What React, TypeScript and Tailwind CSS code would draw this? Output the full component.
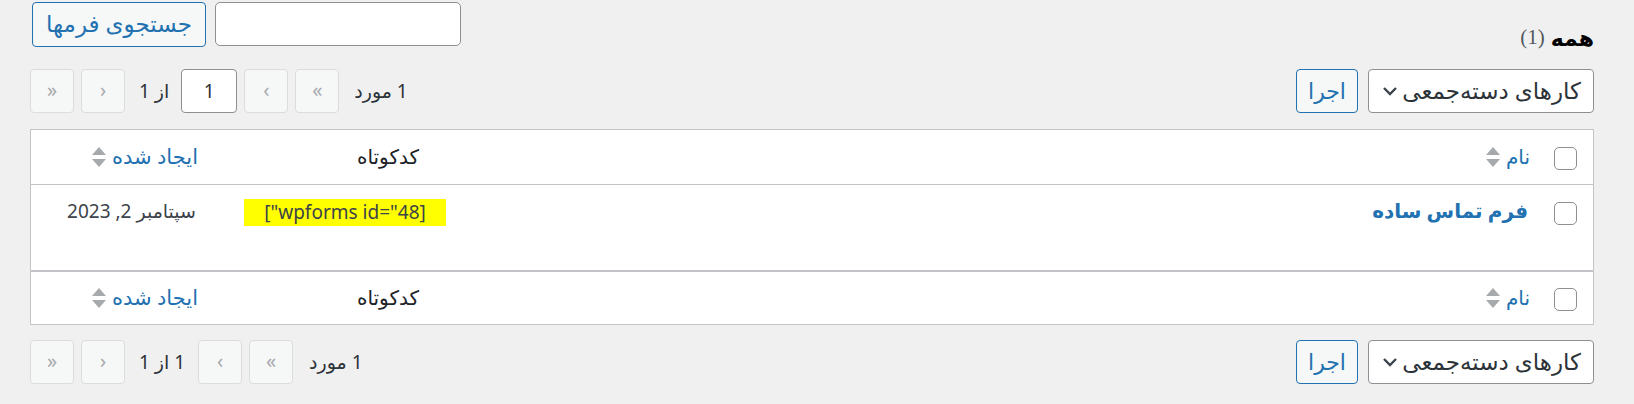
import React from "react";

const FONT = { fontFamily: '"Noto Sans", "DejaVu Sans", sans-serif' };

function SortIcon() {
  return (
    <svg width="14" height="22" viewBox="0 0 14 22" className="shrink-0">
      <path d="M0 9 L7 1 L14 9 Z" fill="#a7aaad" />
      <path d="M0 13 L14 13 L7 21 Z" fill="#a7aaad" />
    </svg>
  );
}

function Checkbox() {
  return <div className="w-[23px] h-[23px] rounded-[5px] border border-[#8c8f94] bg-white shrink-0" />;
}

function NavBtn({ glyph }: { glyph: string }) {
  return (
    <div className="w-[44px] h-[44px] rounded-[4px] border border-[#dcdcde] bg-[#f6f7f7] text-[#a7aaad] flex items-center justify-center text-[20px] leading-none pb-[2px] shrink-0">
      {glyph}
    </div>
  );
}

function BulkActions() {
  return (
    <div className="flex items-center gap-[10px]">
      <div className="w-[226px] h-[44px] rounded-[4px] border border-[#8c8f94] bg-white flex items-center justify-between pr-[12px] pl-[12px] text-[#2c3338]">
        <span className="text-[23px] leading-none pb-[2px]">کارهای دسته‌جمعی</span>
        <svg width="18" height="18" viewBox="0 0 18 18">
          <path d="M3 6 L9 12 L15 6" fill="none" stroke="#3c434a" strokeWidth="2.4" />
        </svg>
      </div>
      <div className="w-[62px] h-[44px] rounded-[4px] border border-[#2271b1] bg-[#f6f7f7] text-[#2271b1] flex items-center justify-center text-[22px] leading-none pb-[2px]">
        اجرا
      </div>
    </div>
  );
}

function Pagination({ top }: { top: boolean }) {
  return (
    <div className="flex items-center text-[19px] text-[#2c3338]">
      <span className={top ? "ml-[15px]" : "ml-[16px]"}>1 مورد</span>
      <NavBtn glyph="»" />
      <div className="w-[7px]" />
      <NavBtn glyph="›" />
      {top ? (
        <>
          <div className="w-[7px]" />
          <div className="w-[56px] h-[44px] rounded-[4px] border border-[#8c8f94] bg-white flex items-center justify-center">1</div>
          <span className="mr-[12px] ml-[14px]">از 1</span>
        </>
      ) : (
        <span className="mr-[13px] ml-[14px]">1 از 1</span>
      )}
      <NavBtn glyph="‹" />
      <div className="w-[7px]" />
      <NavBtn glyph="«" />
    </div>
  );
}

function HeadRow({ footer }: { footer?: boolean }) {
  return (
    <div
      className={
        "grid grid-cols-[54px_1fr_221px_179px] items-center " +
        (footer ? "h-[53px] border-t border-[#c3c4c7]" : "h-[55px] border-b border-[#c3c4c7]")
      }
    >
      <div className="flex justify-end pl-[15px] pt-[3px]">
        <Checkbox />
      </div>
      <div className="flex items-center gap-[6px] pr-[9px] text-[#2271b1]">
        <span className="text-[20px]">نام</span>
        <SortIcon />
      </div>
      <div className="pr-[12px] text-[#1d2327] text-[20px]">کدکوتاه</div>
      <div className="flex items-center gap-[6px] pr-[12px] text-[#2271b1]">
        <span className="text-[21px]">ایجاد شده</span>
        <SortIcon />
      </div>
    </div>
  );
}

export default function App() {
  return (
    <div dir="rtl" style={FONT} className="w-[1634px] h-[404px] bg-[#f0f0f0] pl-[30px] pr-[40px] text-[19px] leading-[1.4] text-[#3c434a] overflow-hidden">
      <div className="flex justify-between items-start h-[47px] pt-[2px]">
        <div className="pt-[20px] text-[#50575e] flex items-center gap-[6px]">
          <span className="font-bold text-[#000] text-[22px]">همه</span>
          <span style={{ fontFamily: '"Liberation Serif", serif' }} className="text-[21px]">(1)</span>
        </div>
        <div className="flex gap-[9px] ml-[2px]">
          <div className="w-[246px] h-[44px] rounded-[5px] border border-[#8c8f94] bg-white" />
          <div className="w-[174px] h-[45px] rounded-[4px] border border-[#2271b1] bg-[#f6f7f7] text-[#2271b1] flex items-center justify-center text-[23px] leading-none pb-[2px]">
            جستجوی فرمها
          </div>
        </div>
      </div>

      <div className="flex justify-between items-center h-[44px] mt-[22px]">
        <BulkActions />
        <Pagination top />
      </div>

      <div className="mt-[16px] border border-[#c3c4c7] bg-white">
        <HeadRow />
        <div className="grid grid-cols-[54px_1fr_221px_179px] items-start h-[86px] border-b border-[#c3c4c7]">
          <div className="flex justify-end pl-[15px] pt-[17px]">
            <Checkbox />
          </div>
          <div className="pr-[11px] pt-[12px] flex">
            <span className="font-bold text-[#2271b1] text-[20px]">فرم تماس ساده</span>
          </div>
          <div className="pt-[14px] flex">
            <span dir="rtl" className="bg-[#ffff00] text-[#3c434a] mr-[-15px] w-[202px] h-[27px] flex items-center justify-center leading-none">
              [wpforms id="48"]
            </span>
          </div>
          <div className="pr-[14px] pt-[13px] text-[#3c434a]">سپتامبر 2, 2023</div>
        </div>
        <HeadRow footer />
      </div>

      <div className="flex justify-between items-center h-[44px] mt-[15px]">
        <BulkActions />
        <Pagination top={false} />
      </div>
    </div>
  );
}
